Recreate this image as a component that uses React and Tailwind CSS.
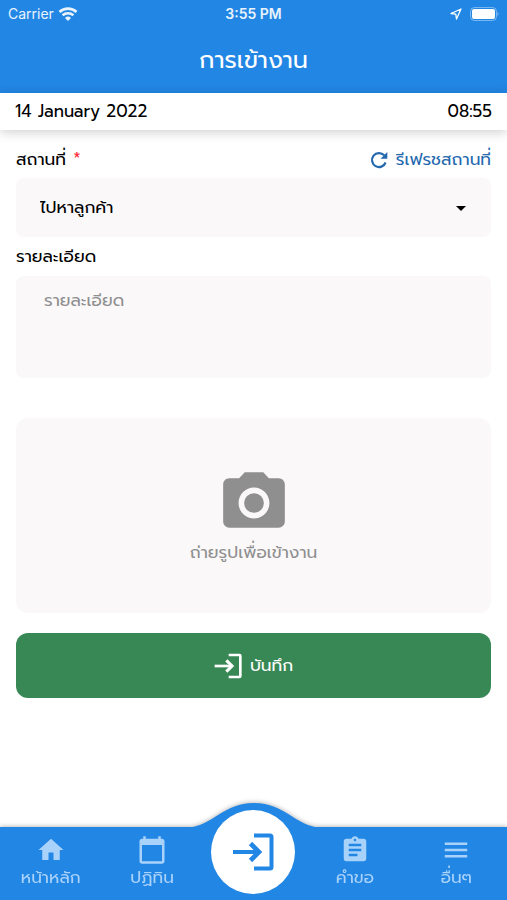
import { MdArrowDropDown, MdAssignment, MdCalendarToday, MdHome, MdMenu, MdPhotoCamera } from 'react-icons/md';

const menuItems = [
  { path: '#home', icon: MdHome, label: 'หน้าหลัก' },
  { path: '#calendar', icon: MdCalendarToday, label: 'ปฏิทิน' },
  null,
  { path: '#requests', icon: MdAssignment, label: 'คำขอ' },
  { path: '#more', icon: MdMenu, label: 'อื่นๆ' }
];

const EnterIcon = ({ className }) => (
  <svg viewBox="0 0 42 38" fill="none" stroke="currentColor" strokeWidth="4" className={className} aria-hidden="true">
    <path d="M1 19h26" />
    <path d="M18.500 10.500l8.500 8.500-8.500 8.500" strokeWidth="4.600" />
    <path d="M22 2.500h16q1.500 0 1.500 1.500v30q0 1.500-1.500 1.500H22" />
  </svg>
);

const RefreshIcon = ({ className }) => (
  <svg viewBox="0 0 18 18" fill="none" className={className} aria-hidden="true">
    <path d="M14.200 4.300A7 7 0 1 0 15.600 11.500" stroke="currentColor" strokeWidth="2.200" />
    <path d="M17.300 1v6.700h-6.700z" fill="currentColor" />
  </svg>
);

const StatusBar = () => (
  <div className="grid h-7 grid-cols-3 items-center px-2 font-['Inter',sans-serif] text-sm">
    <div className="flex items-center gap-1 text-white/90">
      <span>Carrier</span>
      <svg viewBox="0 0 20 14" className="h-4 w-5" fill="none" stroke="currentColor" strokeWidth="2.6" aria-hidden="true">
        <path d="M1.500 5a12.400 12.400 0 0 1 17 0M4.600 8.300a8 8 0 0 1 10.800 0" />
        <path d="M10 14l-3-3a4.400 4.400 0 0 1 6 0z" fill="currentColor" stroke="none" />
      </svg>
    </div>
    <span className="text-center font-semibold text-white/90">3:55 PM</span>
    <div className="flex items-center justify-end gap-2">
      <svg viewBox="0 0 12 12" className="size-3" fill="none" stroke="currentColor" strokeWidth="1.300" strokeLinejoin="round" aria-hidden="true">
        <path d="M11 1L1 5.500l4.800.7L6.500 11z" />
      </svg>
      <svg viewBox="0 0 29 14" className="h-[14px] w-[29px]" aria-hidden="true">
        <rect x=".5" y=".5" width="26" height="13" rx="4" fill="none" stroke="currentColor" opacity=".4" />
        <rect x="2" y="2" width="23" height="10" rx="2" fill="currentColor" />
        <path d="M27.500 5v4q2-2 0-4" fill="currentColor" opacity=".5" />
      </svg>
    </div>
  </div>
);

const BottomNav = () => (
  <nav className="relative mt-auto bg-[#2286e4] text-[#a9d2fb] drop-shadow-[0_-1px_2px_rgba(0,0,0,0.25)]">
    <svg viewBox="0 0 136 25" className="absolute bottom-full left-1/2 -mb-px h-[25px] w-[136px] -translate-x-1/2 text-[#2286e4]" aria-hidden="true">
      <path d="M0 25C28 23 36 0 68 0s40 23 68 25z" fill="currentColor" />
    </svg>
    <div className="grid h-[73px] grid-cols-5">
      {menuItems.map((item) =>
        item ? (
          <a key={item.path} href={item.path} className="flex flex-col items-center pt-2">
            <item.icon className="size-[30px]" />
            <span className="text-[17px] leading-6">{item.label}</span>
          </a>
        ) : (
          <div key="enter" className="relative">
            <button
              type="button"
              aria-label="การเข้างาน"
              className="absolute -top-[17px] left-1/2 flex size-[84px] -translate-x-1/2 items-center justify-center rounded-full bg-white text-[#2286e4]"
            >
              <EnterIcon className="h-[38px] w-[42px]" />
            </button>
          </div>
        )
      )}
    </div>
  </nav>
);

const App = () => {
  return (
    <div className="flex min-h-screen flex-col bg-white font-['Prompt','Noto_Sans_Thai','Noto_Sans',sans-serif] text-[17px] text-black">
      <header className="h-[93px] bg-[#2286e4] text-white">
        <StatusBar />
        <h1 className="pt-4 text-center text-2xl leading-8">การเข้างาน</h1>
      </header>

      <div className="flex h-[37px] items-center justify-between px-[15px] shadow-[0_2px_12px_rgba(0,0,0,0.2)]">
        <span>14 January 2022</span>
        <span>08:55</span>
      </div>

      <form className="flex flex-col px-4 pb-8 pt-4" onSubmit={(e) => e.preventDefault()}>
        <div className="flex h-8 items-center justify-between pb-1">
          <label htmlFor="place">
            สถานที่ <span className="ml-px text-red-500">*</span>
          </label>
          <button type="button" className="flex items-center gap-2 text-[#2468ae]">
            <RefreshIcon className="size-[18px]" />
            รีเฟรชสถานที่
          </button>
        </div>
        <div className="relative">
          <select id="place" className="h-[59px] w-full appearance-none rounded-lg bg-[#faf8f9] px-6">
            <option>ไปหาลูกค้า</option>
          </select>
          <MdArrowDropDown className="pointer-events-none absolute right-[18px] top-[18px] size-6" />
        </div>

        <label htmlFor="detail" className="flex h-[39px] items-center">รายละเอียด</label>
        <textarea
          id="detail"
          placeholder="รายละเอียด"
          className="block h-[102px] w-full resize-none rounded-lg bg-[#faf8f9] px-7 py-3 leading-6 placeholder:text-[#8f8f8f]"
        />

        <button type="button" className="mt-10 flex h-[195px] flex-col items-center justify-center rounded-xl bg-[#faf8f9] text-[#8f8f8f]">
          <MdPhotoCamera className="size-[74px]" />
          <span>ถ่ายรูปเพื่อเข้างาน</span>
        </button>

        <button type="submit" className="mt-5 flex h-[65px] items-center justify-center gap-2 rounded-xl bg-[#388855] text-white">
          <EnterIcon className="h-[26px] w-7" />
          บันทึก
        </button>
      </form>

      <BottomNav />
    </div>
  );
};

export default App;
